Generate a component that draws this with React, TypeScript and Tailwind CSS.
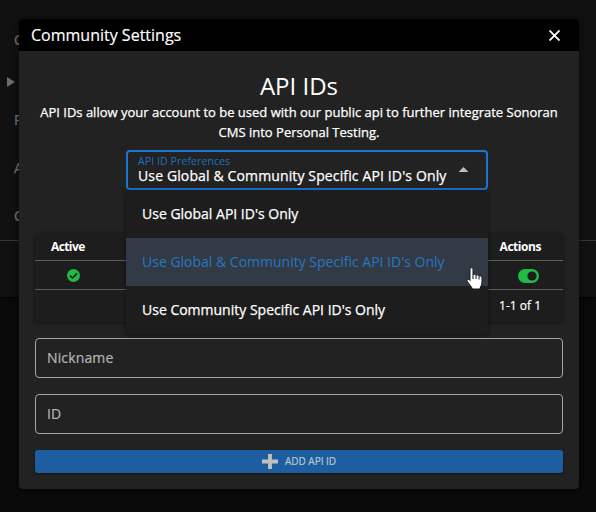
import React from "react";

const options = [
  "Use Global API ID's Only",
  "Use Global & Community Specific API ID's Only",
  "Use Community Specific API ID's Only",
];

function Backdrop() {
  return (
    <div className="absolute inset-0 flex flex-col bg-[#0a0a0a] text-[14px] text-[#7c7c7c]">
      <div className="h-[297px] bg-[#111111] shadow-[0_1px_3px_#000]">
        <div className="flex h-[241px] flex-col border-b border-[#373737] pl-[14px] pt-[30px] [-webkit-text-stroke:0.25px]">
          <span className="h-10 leading-5">C</span>
          <svg className="-ml-[7px] mt-[7px] h-[10px] w-2" viewBox="0 0 8 10">
            <path d="M0 0L8 5L0 10Z" fill="#6c6c6c" />
          </svg>
          <span className="mt-[23px] h-[48px] leading-5">P</span>
          <span className="h-12 leading-5">A</span>
          <span className="leading-5">C</span>
        </div>
      </div>
    </div>
  );
}

function Select() {
  return (
    <div className="relative z-10 ml-[91px] mt-[8px] h-10 w-[362px] rounded-[4px] border-2 border-[#1976d2]">
      <div className="flex h-full justify-between pl-[10px] pr-[17px]">
        <div className="whitespace-nowrap">
          <div className="mt-[3px] text-[10.5px] leading-[12px] tracking-[0.1px] text-[#1f6fbd]">API ID Preferences</div>
          <div className="mt-px text-[14px] leading-[16px] tracking-[0.13px] [-webkit-text-stroke:0.25px]">{options[1]}</div>
        </div>
        <svg className="mt-[15px] h-[5px] w-[11px]" viewBox="0 0 10 5">
          <path d="M0 5L5 0L10 5Z" fill="#bdbdbd" />
        </svg>
      </div>
      <ul className="absolute -left-[2px] top-[38px] w-[362px] rounded-b-[4px] bg-[#1d1d1d] shadow-[0_1px_4px_rgba(0,0,0,0.5)]">
        {options.map((o, i) => (
          <li
            key={o}
            className={
              "flex h-12 items-center whitespace-nowrap pb-[2px] pl-4 text-[14px] " +
              (i === 1 ? "bg-[#323b45] text-[#2676c4]" : "[-webkit-text-stroke:0.25px]")
            }
          >
            {o}
          </li>
        ))}
      </ul>
      <svg className="absolute left-[338px] top-[115px] h-[24px] w-[18px]" viewBox="0 0 18 24">
        <path
          d="M4 2.5C4 .2 7 .2 7 2.5V8C7.5 6.8 9.7 7 10 8.5C10.7 7.4 12.7 7.8 13 9.3C14 8.4 16 9 16 10.8V15C16 18 14.5 19 14 22H6.5C5.5 19.5 3 17 1.2 14.2C.2 12.5 2 11.4 3.2 12.7L4 13.5Z"
          fill="#fff"
          stroke="#15151f"
          strokeWidth="1"
        />
        <path d="M7 8V12M10 8.5V12M13 9.5V12.5" stroke="#15151f" strokeWidth="1" />
      </svg>
    </div>
  );
}

function Table() {
  return (
    <div className="mt-[43px] h-[89px] rounded-[4px] bg-[#1d1d1d] text-[12px] shadow-[0_1px_4px_rgba(0,0,0,0.45)]">
      <div className="flex h-7 items-center justify-between border-b border-[#5d5d5d] pl-[16px] pr-[22px] font-bold">
        <span className="tracking-[-0.6px]">Active</span>
        <span className="tracking-[-0.45px]">Actions</span>
      </div>
      <div className="flex h-[29px] items-center justify-between border-b border-[#5d5d5d] pl-8 pr-6">
        <svg className="h-[13px] w-[13px]" viewBox="0 0 13 13">
          <circle cx="6.5" cy="6.5" r="6.5" fill="#21ba45" />
          <path d="M3 6.7L5.5 9L10 4.4" fill="none" stroke="#1d1d1d" strokeWidth="1.6" />
        </svg>
        <svg className="mt-[2px] h-[14px] w-[21px]" viewBox="0 0 21 14">
          <rect width="21" height="14" rx="7" fill="#21ba45" />
          <circle cx="14" cy="7" r="4.6" fill="#1d1d1d" />
        </svg>
      </div>
      <div className="flex h-8 items-center justify-end pr-[22px] [-webkit-text-stroke:0.2px]">1-1 of 1</div>
    </div>
  );
}

function Field({ label }: { label: string }) {
  return (
    <div className="mt-4 flex h-10 items-center rounded-[4px] border border-[#a7a7a7] pb-[2px] pl-[11px] text-[14px] tracking-[0.14px] text-[#b4b4b4] [-webkit-text-stroke:0.2px]">
      {label}
    </div>
  );
}

export default function App() {
  return (
    <div className="relative h-[512px] w-[596px] overflow-hidden font-['Open_Sans',sans-serif] text-white">
      <Backdrop />
      <div className="relative ml-[19px] mt-[19px] h-[470px] w-[560px] rounded-[4px] bg-[#222222] shadow-[0_2px_8px_rgba(0,0,0,0.6)]">
        <div className="flex h-8 items-center justify-between rounded-t-[4px] bg-black pl-3 pr-[19px]">
          <h1 className="text-[16px] [-webkit-text-stroke:0.15px]">Community Settings</h1>
          <svg className="h-[11px] w-[11px]" viewBox="0 0 11 11">
            <path d="M.5 .5L10.5 10.5M10.5 .5L.5 10.5" stroke="#fff" strokeWidth="1.8" />
          </svg>
        </div>
        <div className="px-4 pt-[18px]">
          <h2 className="text-center text-[24px] leading-[33px]">API IDs</h2>
          <p className="text-center text-[13px] leading-5 [-webkit-text-stroke:0.25px]">
            API IDs allow your account to be used with our public api to further integrate Sonoran
            <br />
            CMS into Personal Testing.
          </p>
          <Select />
          <Table />
          <Field label="Nickname" />
          <Field label="ID" />
          <button className="mt-4 flex h-[23px] w-full items-center justify-center gap-[7px] rounded-[3px] bg-[#1c5e9f] text-[10px] text-[#bdc5cd] shadow-[0_1px_3px_rgba(0,0,0,0.5)] [-webkit-text-stroke:0.2px]">
            <svg className="h-[15px] w-[16px]" viewBox="0 0 16 15">
              <path d="M8 0V15M0 7.5H16" stroke="#c0c0c0" strokeWidth="3.8" />
            </svg>
            ADD API ID
          </button>
        </div>
      </div>
    </div>
  );
}
